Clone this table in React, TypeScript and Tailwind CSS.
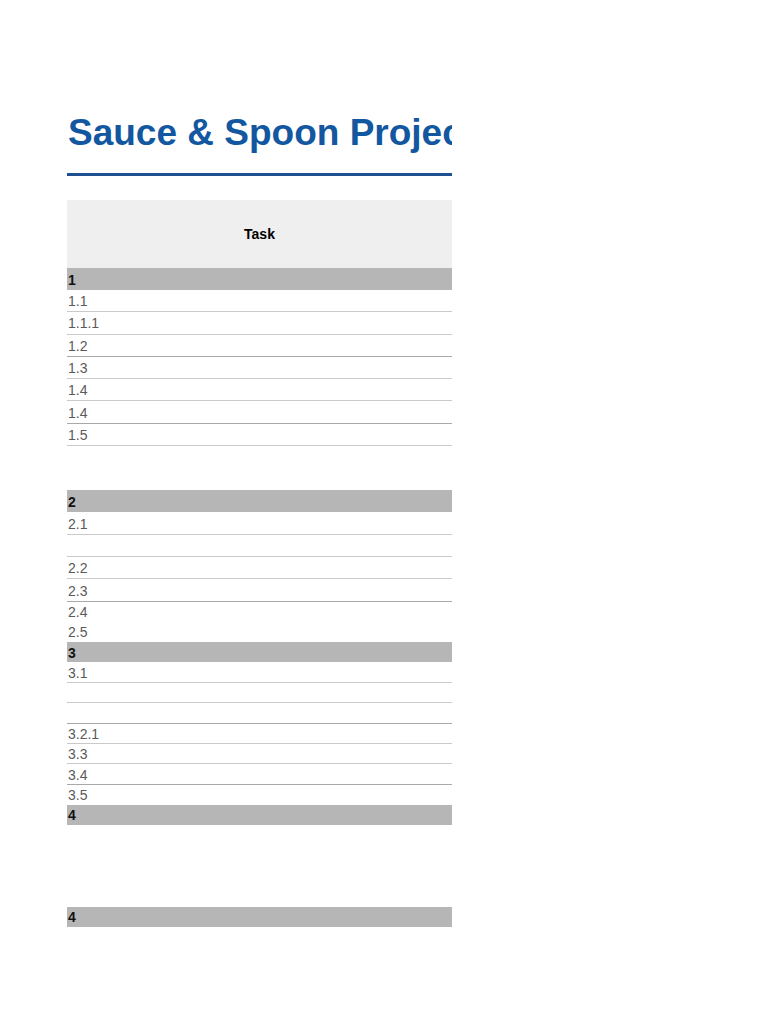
import React from 'react';

type Row = {
  label?: string;
  kind: 'group' | 'task' | 'spacer';
  h: string;
  border?: 'light' | 'dark' | 'none';
};

// heights are taken from the sheet, rows aren't all the same size
const rows: Row[] = [
  { label: '1', kind: 'group', h: 'h-[22px]' },
  { label: '1.1', kind: 'task', h: 'h-[22.3px]', border: 'light' },
  { label: '1.1.1', kind: 'task', h: 'h-[22.3px]', border: 'light' },
  { label: '1.2', kind: 'task', h: 'h-[22.3px]', border: 'dark' },
  { label: '1.3', kind: 'task', h: 'h-[22.3px]', border: 'light' },
  { label: '1.4', kind: 'task', h: 'h-[22.3px]', border: 'light' },
  { label: '1.4', kind: 'task', h: 'h-[22.3px]', border: 'dark' },
  { label: '1.5', kind: 'task', h: 'h-[22.2px]', border: 'light' },
  { kind: 'spacer', h: 'h-[44px]' },
  { label: '2', kind: 'group', h: 'h-[22.5px]' },
  { label: '2.1', kind: 'task', h: 'h-[22.5px]', border: 'light' },
  { label: '', kind: 'task', h: 'h-[22.5px]', border: 'light' },
  { label: '2.2', kind: 'task', h: 'h-[22px]', border: 'light' },
  { label: '2.3', kind: 'task', h: 'h-[22.5px]', border: 'dark' },
  { label: '2.4', kind: 'task', h: 'h-[20px]', border: 'none' },
  { label: '2.5', kind: 'task', h: 'h-[20px]', border: 'none' },
  { label: '3', kind: 'group', h: 'h-[20.4px]' },
  { label: '3.1', kind: 'task', h: 'h-[20.4px]', border: 'light' },
  { label: '', kind: 'task', h: 'h-[20.4px]', border: 'light' },
  { label: '', kind: 'task', h: 'h-[20.4px]', border: 'dark' },
  { label: '3.2.1', kind: 'task', h: 'h-[20.4px]', border: 'light' },
  { label: '3.3', kind: 'task', h: 'h-[20.4px]', border: 'light' },
  { label: '3.4', kind: 'task', h: 'h-[20.4px]', border: 'dark' },
  { label: '3.5', kind: 'task', h: 'h-[20.2px]', border: 'none' },
  { label: '4', kind: 'group', h: 'h-[20px]' },
  { kind: 'spacer', h: 'h-[82px]' },
  { label: '4', kind: 'group', h: 'h-[20px]' },
];

export default function App() {
  return (
    <div className="min-h-[1024px] w-[768px] bg-white font-['Liberation_Sans',Arial,sans-serif]">
      <div className="ml-[67px] w-[385px] overflow-hidden pt-[114px]">
        {/* Title - clipped by the sheet's print area */}
        <h1 className="whitespace-nowrap pl-px text-[37px] font-bold leading-none text-[#12579f]">
          Sauce &amp; Spoon Project Plan
        </h1>
        <div className="mt-[22px] h-[3px] w-full bg-[#1d4f91]" />

        {/* Header */}
        <div className="mt-[24px] flex h-[68px] items-center justify-center bg-[#efefef]">
          <span className="text-[14px] font-bold text-black">Task</span>
        </div>

        {/* Rows */}
        <div className="flex flex-col">
          {rows.map((row, i) => {
            if (row.kind === 'spacer') {
              return <div key={i} className={row.h} />;
            }
            if (row.kind === 'group') {
              return (
                <div
                  key={i}
                  className={`${row.h} flex items-center bg-[#b6b6b6] pl-px pt-px text-[14px] font-bold leading-none text-[#111]`}
                >
                  {row.label}
                </div>
              );
            }
            const borderClass =
              row.border === 'dark'
                ? 'border-b border-[#a9a9a9]'
                : row.border === 'light'
                ? 'border-b border-[#cacaca]'
                : '';
            return (
              <div
                key={i}
                className={`${row.h} ${borderClass} flex items-center pl-px pt-px text-[14px] leading-none text-[#5a5a5a]`}
              >
                {row.label}
              </div>
            );
          })}
        </div>
      </div>
    </div>
  );
}
